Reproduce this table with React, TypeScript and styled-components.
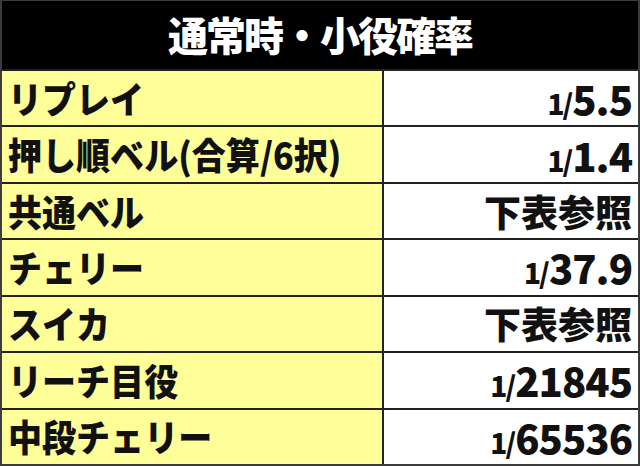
import React from 'react';
import styled, { createGlobalStyle } from 'styled-components';

const GlobalStyle = createGlobalStyle`
  html, body {
    margin: 0;
    padding: 0;
    background: #ffffff;
  }
  * {
    box-sizing: border-box;
  }
`;

// Table frame
const Table = styled.div`
  width: 640px;
  height: 466px;
  display: grid;
  grid-template-columns: 382px 1fr;
  grid-template-rows: 68px repeat(7, 1fr);
  border: 2px solid #3c3c3c;
  border-top-width: 1px;
  background: #ffffff;
  font-family: "Noto Sans CJK JP", "Noto Sans", sans-serif;
  font-weight: 900;
  color: #111111;
`;

const Header = styled.div`
  grid-column: 1 / 3;
  background: #000000;
  color: #ffffff;
  display: flex;
  align-items: center;
  justify-content: center;
  font-size: 40px;
  line-height: 1;
  letter-spacing: -2px;
  padding-bottom: 2px;
`;

const LabelCell = styled.div`
  background: #ffff99;
  border-top: 2px solid #222222;
  border-right: 2px solid #222222;
  display: flex;
  align-items: center;
  padding-left: 6px;
  overflow: hidden;
`;

const LabelText = styled.span`
  display: inline-block;
  font-size: 37px;
  line-height: 1;
  white-space: nowrap;
  transform: scaleX(0.92);
  transform-origin: left center;
`;

const ValueCell = styled.div`
  border-top: 2px solid #222222;
  display: flex;
  align-items: center;
  justify-content: flex-end;
  padding-right: 6px;
`;

const Fraction = styled.span`
  display: inline-flex;
  align-items: baseline;
  line-height: 1;
  white-space: nowrap;
`;

const Denominator = styled.span`
  font-size: 28px;
  letter-spacing: -2px;
  margin-right: 1px;
`;

const Numerator = styled.span`
  font-size: 40px;
  letter-spacing: -1px;
`;

const NoteText = styled.span`
  font-size: 37px;
  line-height: 1;
  white-space: nowrap;
`;

type Row = { label: string; value?: string; note?: string };

const rows: Row[] = [
  { label: 'リプレイ', value: '5.5' },
  { label: '押し順ベル(合算/6択)', value: '1.4' },
  { label: '共通ベル', note: '下表参照' },
  { label: 'チェリー', value: '37.9' },
  { label: 'スイカ', note: '下表参照' },
  { label: 'リーチ目役', value: '21845' },
  { label: '中段チェリー', value: '65536' },
];

const App: React.FC = () => {
  return (
    <>
      <GlobalStyle />
      <Table>
        <Header>通常時・小役確率</Header>
        {rows.map((row) => (
          <React.Fragment key={row.label}>
            <LabelCell>
              <LabelText>{row.label}</LabelText>
            </LabelCell>
            <ValueCell>
              {row.value ? (
                <Fraction>
                  <Denominator>1/</Denominator>
                  <Numerator>{row.value}</Numerator>
                </Fraction>
              ) : (
                <NoteText>{row.note}</NoteText>
              )}
            </ValueCell>
          </React.Fragment>
        ))}
      </Table>
    </>
  );
};

export default App;
